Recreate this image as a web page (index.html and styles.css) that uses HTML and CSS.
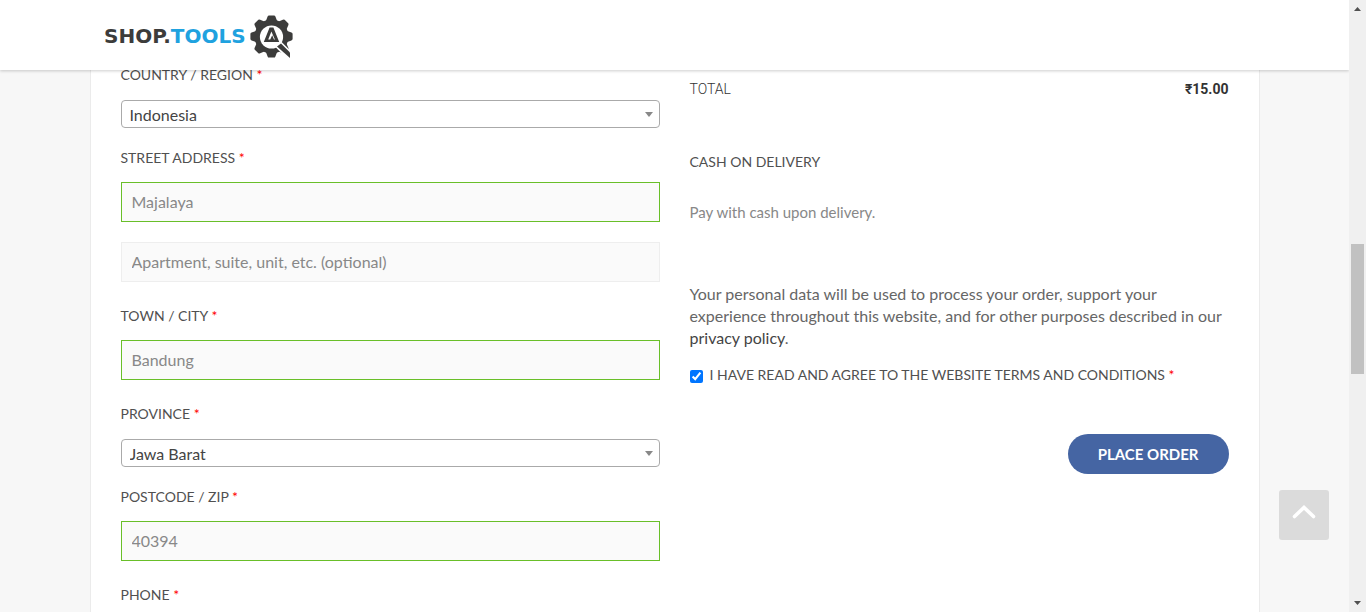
FILE: index.html
```html
<!DOCTYPE html>
<html lang="en">
<head>
<meta charset="utf-8">
<title>Checkout – Shop.Tools</title>
<link rel="stylesheet" href="styles.css">
</head>
<body>
<div class="page">
  <header class="header">
    <a class="logo" href="#" aria-label="Shop.Tools">
      <span class="logo-text">SHOP.<span class="logo-accent">TOOLS</span></span>
      <svg class="logo-mark" viewBox="0 0 43 43" aria-hidden="true">
        <defs><path id="tooth" d="M15.5 7 L17.6 1.6 Q18 .4 19 .4 H24 Q25 .4 25.4 1.6 L27.5 7Z"/></defs>
        <g fill="#3c3c3b">
          <circle cx="21.5" cy="21.5" r="17"/>
          <use href="#tooth"/>
          <use href="#tooth" transform="rotate(45 21.5 21.5)"/>
          <use href="#tooth" transform="rotate(90 21.5 21.5)"/>
          <use href="#tooth" transform="rotate(135 21.5 21.5)"/>
          <use href="#tooth" transform="rotate(180 21.5 21.5)"/>
          <use href="#tooth" transform="rotate(225 21.5 21.5)"/>
          <use href="#tooth" transform="rotate(270 21.5 21.5)"/>
          <use href="#tooth" transform="rotate(315 21.5 21.5)"/>
        </g>
        <path d="M28 29 L44 45" stroke="#fff" stroke-width="8"/>
        <circle cx="21.5" cy="22" r="11.6" fill="#fff"/>
        <path d="M31 28.5 L40 37.5 V43 L27 31.5Z" fill="#3c3c3b"/>
        <path fill-rule="evenodd" d="M19.6 12.5 H23.4 L29.2 27 H13.8Z M21.4 16.5 L18.2 24.6 H20.2 L22.2 20.2 L24 24.6 H24.9Z" fill="#3c3c3b"/>
      </svg>
    </a>
  </header>

  <main class="main">
    <form class="card">
      <section class="column">
        <div class="field field-select">
          <label class="label" for="country">COUNTRY / REGION <span class="required">*</span></label>
          <div class="select-box"><select class="select" id="country"><option>Indonesia</option></select></div>
        </div>
        <div class="field">
          <label class="label" for="street">STREET ADDRESS <span class="required">*</span></label>
          <div class="inputs">
            <input class="input valid" id="street" type="text" value="Majalaya">
            <input class="input" type="text" aria-label="Apartment" placeholder="Apartment, suite, unit, etc. (optional)">
          </div>
        </div>
        <div class="field">
          <label class="label" for="city">TOWN / CITY <span class="required">*</span></label>
          <input class="input valid" id="city" type="text" value="Bandung">
        </div>
        <div class="field field-select">
          <label class="label" for="province">PROVINCE <span class="required">*</span></label>
          <div class="select-box"><select class="select" id="province"><option>Jawa Barat</option></select></div>
        </div>
        <div class="field">
          <label class="label" for="zip">POSTCODE / ZIP <span class="required">*</span></label>
          <input class="input valid" id="zip" type="text" value="40394">
        </div>
        <div class="field">
          <label class="label" for="phone">PHONE <span class="required">*</span></label>
          <input class="input valid" id="phone" type="text">
        </div>
      </section>

      <section class="column order">
        <div class="total"><span class="total-name">TOTAL</span><strong class="amount">₹15.00</strong></div>
        <div class="label method">CASH ON DELIVERY</div>
        <p class="method-note">Pay with cash upon delivery.</p>
        <p class="privacy">Your personal data will be used to process your order, support your experience throughout this website, and for other purposes described in our <a class="policy" href="#">privacy policy</a>.</p>
        <label class="label terms"><input class="check" type="checkbox" checked><span>I HAVE READ AND AGREE TO THE WEBSITE TERMS AND CONDITIONS <span class="required">*</span></span></label>
        <button class="submit" type="button">PLACE ORDER</button>
      </section>
    </form>
  </main>
  <button class="to-top" type="button" aria-label="Back to top">
    <svg class="chevron" viewBox="0 0 24 14" aria-hidden="true"><path d="M2.5 11.5 L12 2.5 L21.5 11.5" fill="none" stroke="#fff" stroke-width="3.6" stroke-linecap="round"/></svg>
  </button>
</div>
<div class="scrollbar" aria-hidden="true">
  <svg class="arrow" viewBox="0 0 7 4"><path d="M0 4 L3.5 0 L7 4Z" fill="#505050"/></svg>
  <div class="track"><div class="thumb"></div></div>
  <svg class="arrow" viewBox="0 0 7 4"><path d="M0 0 L3.5 4 L7 0Z" fill="#505050"/></svg>
</div>
</body>
</html>
```
FILE: styles.css
```css
* { box-sizing: border-box; }

body {
  display: flex;
  height: 100vh;
  margin: 0;
  overflow: hidden;
  background: #f7f7f7;
  color: #666;
  font: 16px/22px Lato, sans-serif;
}

.page {
  position: relative;
  flex: 1;
  min-width: 0;
  overflow: hidden;
}

.header {
  position: relative;
  z-index: 2;
  height: 70px;
  padding: 15px 104px;
  background: #fff;
  box-shadow: 0 1px 3px rgba(0, 0, 0, 0.2);
}

.logo {
  display: inline-flex;
  align-items: center;
  gap: 4px;
  color: #3c3c3b;
  text-decoration: none;
}

.logo-text { font: bold 20px/43px "DejaVu Sans", sans-serif; }
.logo-accent { color: #1fa2df; }
.logo-mark { width: 43px; height: 43px; }

.main {
  max-width: 1170px;
  margin: -6px auto 0;
}

.card {
  display: grid;
  grid-template-columns: 1fr 1fr;
  gap: 30px;
  padding: 0 30px;
  border: solid #ebebeb;
  border-width: 0 1px;
  background: #fff;
}

.column {
  display: flex;
  flex-direction: column;
  min-width: 0;
}

.field {
  display: flex;
  flex-direction: column;
  gap: 13px;
  margin-bottom: 23px;
}

.field-select {
  gap: 14px;
  margin-bottom: 19px;
}

.label {
  color: #505050;
  font-size: 14px;
  line-height: 22px;
}

.required { color: #f00; }

.inputs {
  display: grid;
  gap: 20px;
}

.input {
  width: 100%;
  height: 40px;
  padding: 0 10px 2px;
  border: 1px solid #eee;
  border-radius: 0;
  background: #fafafa;
  color: #888;
  font: 16px/22px Lato, sans-serif;
}

.input::placeholder { color: #888; }
.valid { border-color: #69bf29; }

.select-box { position: relative; }

.select-box::after {
  content: "";
  position: absolute;
  top: 12px;
  right: 7px;
  border: solid transparent;
  border-width: 5px 4px 0;
  border-top-color: #888;
  pointer-events: none;
}

.select {
  display: block;
  width: 100%;
  height: 28px;
  padding: 2px 8px 0;
  border: 1px solid #aaa;
  border-radius: 4px;
  appearance: none;
  background: #fff;
  color: #444;
  font: 16px/22px Lato, sans-serif;
}

.order { padding-top: 13px; }

.total {
  display: flex;
  justify-content: space-between;
  color: #333;
  font: 14px/24px Roboto, sans-serif;
}

.total-name { font-weight: 300; }
.method { margin-top: 50px; }

.method-note {
  margin: 28px 0 0;
  color: #888;
  font-size: 15px;
}

.privacy { margin: 60px 0 0; }

.policy {
  color: #444;
  text-decoration: none;
}

.terms {
  display: flex;
  align-items: center;
  gap: 7px;
  margin-top: 15px;
}

.check {
  width: 13px;
  height: 13px;
  margin: 2px 0 0;
}

.submit {
  align-self: flex-end;
  height: 40px;
  margin-top: 48px;
  padding: 0 30px;
  border: 0;
  border-radius: 20px;
  background: #4565a3;
  color: #fff;
  font: bold 15px/22px Lato, sans-serif;
}

.to-top {
  position: absolute;
  right: 20px;
  bottom: 72px;
  width: 50px;
  height: 50px;
  padding: 0 0 4px;
  border: 0;
  border-radius: 3px;
  background: #dbdbdb;
}

.chevron { width: 24px; height: 14px; }

.scrollbar {
  display: flex;
  flex-direction: column;
  align-items: center;
  width: 17px;
  padding: 7px 0;
  background: #f0f0f0;
}

.arrow { width: 7px; height: 4px; }

.track {
  flex: 1;
  width: 13px;
  padding-top: 233px;
}

.thumb {
  height: 130px;
  background: #c1c1c1;
}
```
